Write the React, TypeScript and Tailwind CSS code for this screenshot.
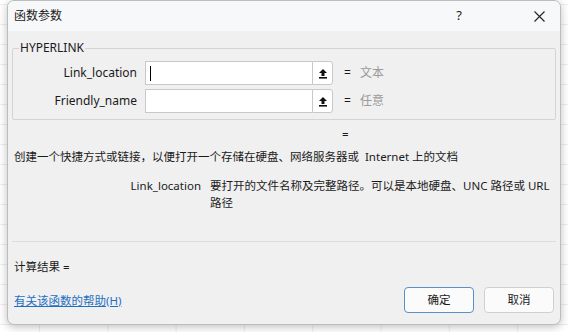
import React from 'react';

const font = { fontFamily: '"Noto Sans", "Noto Sans CJK SC", sans-serif' };

function PickIcon() {
  return (
    <svg width="10" height="11" viewBox="0 0 10 11">
      <path d="M5 1 L9 5 H6.5 V8 H3.5 V5 H1 Z" fill="#111" />
      <rect x="1" y="9" width="8" height="1.6" fill="#111" />
    </svg>
  );
}

function ArgRow({ label, value, caret }: { label: string; value: string; caret?: boolean }) {
  return (
    <div className="flex items-center h-[24px]">
      <div className="w-[118px] text-right text-[12px] text-[#1a1a1a]">{label}</div>
      <div className="ml-[8px] flex h-[24px]">
        <div className="w-[167px] h-[24px] bg-white border border-[#c8c8c8] border-r-0 flex items-center pl-[4px]">
          {caret && <div className="w-[1px] h-[15px] bg-black" />}
        </div>
        <div className="w-[21px] h-[24px] bg-white border border-[#c8c8c8] rounded-r-[3px] flex items-center justify-center">
          <PickIcon />
        </div>
      </div>
      <div className="ml-[11px] text-[12px] text-[#1a1a1a] w-[16px]">=</div>
      <div className="text-[12px] text-[#9a9a9a]">{value}</div>
    </div>
  );
}

export default function App() {
  return (
    <div className="relative w-[568px] h-[332px] bg-white overflow-hidden" style={font}>
      <svg className="absolute inset-0" width="568" height="332">
        <defs>
          <pattern id="grid" x="39" y="4" width="68.3" height="20" patternUnits="userSpaceOnUse">
            <path d="M0 0 V20 M0 0 H68.3" stroke="#dedede" strokeWidth="1" fill="none" />
          </pattern>
        </defs>
        <rect width="568" height="332" fill="url(#grid)" />
      </svg>

      <div className="absolute left-[7px] top-0 w-[554px] h-[325px] rounded-[7px] border border-[#bdbdbd] bg-[#f0f0f0] shadow-[0_2px_8px_rgba(0,0,0,0.25)] overflow-hidden flex flex-col">
        <div className="h-[30px] bg-[#f7f8fa] flex items-center pl-[6px] shrink-0">
          <span className="text-[12px] text-[#1a1a1a]">函数参数</span>
          <span className="ml-auto text-[13px] text-[#1a1a1a] mr-[72px]">?</span>
          <svg width="11" height="11" viewBox="0 0 11 11" className="mr-[15px]">
            <path d="M0.5 0.5 L10.5 10.5 M10.5 0.5 L0.5 10.5" stroke="#222" strokeWidth="1.1" />
          </svg>
        </div>

        <div className="px-[4px] pt-[9px]">
          <fieldset className="border border-[#d4d4d4] rounded-[2px] px-[6px] pt-[5px] pb-[6px] m-0">
            <legend className="text-[12px] text-[#1a1a1a] px-[1px] leading-[16px]">HYPERLINK</legend>
            <div className="flex flex-col gap-[4px]">
              <ArgRow label="Link_location" value="文本" caret />
              <ArgRow label="Friendly_name" value="任意" />
            </div>
          </fieldset>
        </div>

        <div className="text-[11.5px] text-[#1a1a1a] leading-[17px]">
          <div className="pl-[334px] mt-[5px]">=</div>
          <div className="pl-[6px] mt-[6px]">创建一个快捷方式或链接，以便打开一个存储在硬盘、网络服务器或 &nbsp;Internet 上的文档</div>
          <div className="flex mt-[12px]">
            <div className="w-[193px] text-right shrink-0">Link_location</div>
            <div className="ml-[9px] w-[340px]">要打开的文件名称及完整路径。可以是本地硬盘、UNC 路径或 URL 路径</div>
          </div>
        </div>

        <div className="mt-auto px-[4px]">
          <div className="h-[1px] bg-[#dcdcdc]" />
          <div className="pl-[2px] mt-[16px] text-[11.5px] text-[#1a1a1a] leading-[17px]">计算结果 =</div>
          <div className="flex items-center mt-[12px] mb-[11px] pl-[2px] pr-[2px]">
            <a href="#" className="text-[11.5px] text-[#1f6fc2] underline leading-[17px]">有关该函数的帮助(H)</a>
            <button className="ml-auto w-[70px] h-[26px] bg-[#fbfbfb] border border-[#5b8fc7] rounded-[4px] text-[11.5px] text-[#1a1a1a]">确定</button>
            <button className="ml-[10px] w-[70px] h-[26px] bg-[#fbfbfb] border border-[#d0d0d0] rounded-[4px] text-[11.5px] text-[#1a1a1a]">取消</button>
          </div>
        </div>
      </div>
    </div>
  );
}
